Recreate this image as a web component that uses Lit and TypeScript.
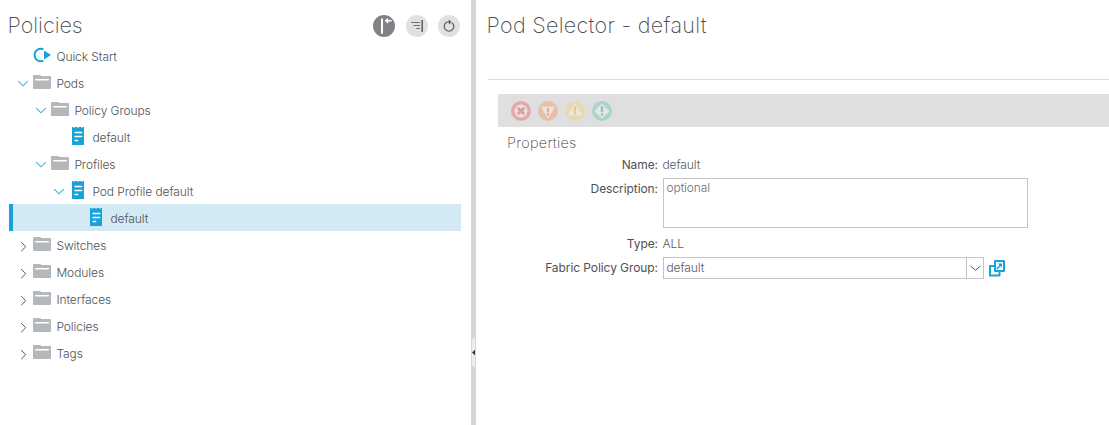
import { LitElement, html, svg, css, nothing } from "lit";
import { customElement, state } from "lit/decorators.js";
import { classMap } from "lit/directives/class-map.js";

type Kind = "start" | "folder" | "doc";
interface Node {
  label: string;
  depth: number;
  kind: Kind;
  open?: boolean;
}

const NODES: Node[] = [
  { label: "Quick Start", depth: 0, kind: "start" },
  { label: "Pods", depth: 0, kind: "folder", open: true },
  { label: "Policy Groups", depth: 1, kind: "folder", open: true },
  { label: "default", depth: 2, kind: "doc" },
  { label: "Profiles", depth: 1, kind: "folder", open: true },
  { label: "Pod Profile default", depth: 2, kind: "doc", open: true },
  { label: "default", depth: 3, kind: "doc" },
  { label: "Switches", depth: 0, kind: "folder", open: false },
  { label: "Modules", depth: 0, kind: "folder", open: false },
  { label: "Interfaces", depth: 0, kind: "folder", open: false },
  { label: "Policies", depth: 0, kind: "folder", open: false },
  { label: "Tags", depth: 0, kind: "folder", open: false },
];

const ICONS = {
  start: html`<svg width="18" height="18" viewBox="0 0 18 18">
    <path d="M10.4 3.4A6.2 6.2 0 1 0 10.4 14.6" fill="none" stroke="#17a2d9" stroke-width="1.9" />
    <path d="M11 4.6L18 9L11 13.4Z" fill="#17a2d9" />
  </svg>`,
  folder: html`<svg width="18" height="18" viewBox="0 0 18 18">
    <path d="M0 2.8Q0 2 .8 2H7.3Q8 2 8 3H17.2Q18 3 18 3.8V15.2Q18 16 17.2 16H.8Q0 16 0 15.2Z" fill="#b4b8bb" />
    <path d="M2.6 6.7H15.4" stroke="#fff" stroke-width="1.4" stroke-linecap="round" />
  </svg>`,
  doc: html`<svg width="18" height="18" viewBox="0 0 18 18">
    <path d="M3 0H4.2L5 1.3L5.8 0H8.2L9 1.3L9.8 0H12.2L13 1.3L13.8 0H15V18H3Z" fill="#17a2d9" />
    <path d="M6 5.5H12.7M6 9.5H12.7M6 13.5H8.7" stroke="#fff" stroke-width="1.4" stroke-linecap="round" />
  </svg>`,
};

const FAULTS = [
  {
    color: "#e5a9a9",
    mark: svg`<circle cx="10" cy="10" r="6.4" fill="#e6e3e3"/><path d="M6.7 6.7L13.3 13.3M13.3 6.7L6.7 13.3" stroke="#e09c9c" stroke-width="2.8"/>`,
  },
  {
    color: "#e8c0aa",
    mark: svg`<path d="M2.8 5.8H17.2L10 17.6Z" fill="#e8e5e3"/><path d="M10 7V11.4M10 12.4V14.6" stroke="#e3ab8a" stroke-width="2.2"/>`,
  },
  {
    color: "#ead8ae",
    mark: svg`<path d="M10 2.2L17.4 14.2H2.6Z" fill="#e8e6e2"/><path d="M10 5.4V10.4M10 11.4V13.4" stroke="#e2c783" stroke-width="2.2"/>`,
  },
  {
    color: "#abd2cb",
    mark: svg`<path d="M10 2.4L17.6 10L10 17.6L2.4 10Z" fill="#e3e7e6"/><path d="M10 5.2V11.2M10 12.4V14.6" stroke="#8cc6bc" stroke-width="2.4"/>`,
  },
];

@customElement("policy-tree")
class PolicyTree extends LitElement {
  @state() private selected = 6;

  static styles = css`
    :host { display: block; }
    .head { display: flex; align-items: center; height: 42px; padding: 0 11px 0 8px; box-sizing: border-box; }
    .title { flex: 1; font-size: 21.5px; line-height: 30px; padding-top: 8px; font-weight: 200; letter-spacing: 0; margin-left: -0.5px; color: #4c4d4f; }
    .tools { display: flex; gap: 10px; padding-top: 10px; }
    .tools svg { display: block; width: 22px; height: 22px; }
    .tools svg:first-child { margin-right: 1px; }
    .tree { margin: 0 10px 0 9px; }
    .row { display: flex; align-items: center; height: 27px; box-sizing: border-box; border-left: 4px solid transparent; cursor: default; }
    .row.selected { background: #d3eaf5; border-left-color: #17a2d9; }
    .indent { flex: none; }
    .arrow { width: 11px; height: 10px; margin: 0 4px 0 5px; flex: none; }
    .arrow svg, .icon svg { display: block; }
    .icon { width: 18px; height: 18px; flex: none; margin: 0 5.4px 1px 0; }
    .label { font-size: 12px; line-height: 18px; padding-top: 3px; letter-spacing: -0.08px; white-space: nowrap; color: #505153; }
  `;

  private arrow(open?: boolean) {
    if (open === undefined) return nothing;
    return open
      ? html`<svg width="11" height="10"><path d="M.2 3.2L5 7.8L9.8 3.2" fill="none" stroke="#3fb0dd" stroke-width="1.1" /></svg>`
      : html`<svg width="11" height="12"><path d="M3.2 2.2L7.8 6.7L3.2 11.2" fill="none" stroke="#58595b" stroke-width="1" /></svg>`;
  }

  render() {
    return html`
      <div class="head">
        <div class="title">Policies</div>
        <div class="tools">
          <svg viewBox="0 0 22 22">
            <circle cx="11" cy="11" r="11" fill="#808285" />
            <path d="M9 4.2V18" stroke="#fff" stroke-width="2" stroke-linecap="round" />
            <path d="M13 5.8H18.7M15 3.6L12.8 5.8L15 8" fill="none" stroke="#fff" stroke-width="1.5" />
          </svg>
          <svg viewBox="0 0 22 22">
            <circle cx="11" cy="11" r="11" fill="#e1e1e1" />
            <path d="M5 7.5H14M7.7 10.5H14M10.3 13.5H14" stroke="#707174" stroke-width="1.1" />
            <path d="M16.2 5V17" stroke="#58595b" stroke-width="1.5" />
          </svg>
          <svg viewBox="0 0 22 22">
            <circle cx="11" cy="11" r="11" fill="#e1e1e1" />
            <path d="M8 7.7A4.8 4.8 0 1 0 14 7.7" fill="none" stroke="#58595b" stroke-width="1.2" />
            <path d="M7.6 7.5L11 6.8" fill="none" stroke="#58595b" stroke-width="1.1" />
            <path d="M10.6 4.6L13.6 7L11 9.4Z" fill="#58595b" />
          </svg>
        </div>
      </div>
      <div class="tree">
        ${NODES.map(
          (n, i) => html`<div
            class=${classMap({ row: true, selected: i === this.selected })}
            @click=${() => (this.selected = i)}
          >
            <span class="indent" style="width:${n.depth * 18}px"></span>
            <span class="arrow">${this.arrow(n.open)}</span>
            <span class="icon">${ICONS[n.kind]}</span>
            <span class="label">${n.label}</span>
          </div>`
        )}
      </div>
    `;
  }
}

@customElement("pod-selector")
class PodSelector extends LitElement {
  static styles = css`
    :host { display: block; }
    .title { font-size: 21.5px; line-height: 30px; padding: 10px 0 0 10.5px; height: 79px; box-sizing: border-box; font-weight: 200; letter-spacing: 0.32px; color: #4c4d4f; }
    .rule { height: 1px; background: #dcdcdc; margin-left: 12px; }
    .bar { height: 33px; margin: 14px 0 0 22px; padding-left: 13px; background: #dfdfdf; display: flex; align-items: center; gap: 7px; }
    .bar svg { display: block; width: 20px; height: 20px; margin-top: 1px; }
    .section { font-size: 14.5px; font-weight: 200; line-height: 20px; margin: 6px 0 0 31px; height: 19px; letter-spacing: 0.26px; color: #3f4042; }
    .form { display: grid; grid-template-columns: 182px auto; grid-template-rows: 26px 50px 29px 22px; column-gap: 5px; justify-content: start; }
    .key { text-align: right; font-size: 12px; line-height: 18px; font-weight: 400; letter-spacing: -0.08px; color: #505153; padding-top: 4px; white-space: nowrap; }
    .key.desc { padding-top: 2px; }
    .key.type { padding-top: 7px; }
    .key.group { padding-top: 2px; }
    .val { font-size: 12px; line-height: 18px; padding-top: 4px; letter-spacing: -0.1px; margin-left: -0.5px; }
    .val.type { padding-top: 7px; }
    .area { box-sizing: border-box; width: 365px; height: 50px; border: 1px solid #c4c4c6; padding: 0 2.5px; font-size: 12px; line-height: 17px; letter-spacing: -0.1px; color: #6d6e71; }
    .pick { display: flex; align-items: center; }
    .combo { box-sizing: border-box; width: 321px; height: 22px; border: 1px solid #c4c4c6; display: flex; }
    .text { flex: 1; padding-left: 2.5px; font-size: 12px; line-height: 20px; letter-spacing: -0.1px; }
    .drop { width: 16px; border-left: 1px solid #c4c4c6; display: grid; place-items: center; }
    .link { display: block; margin-left: 5px; }
  `;

  render() {
    return html`
      <div class="title">Pod Selector - default</div>
      <div class="rule"></div>
      <div class="bar">
        ${FAULTS.map(
          (f) => html`<svg viewBox="0 0 20 20"><circle cx="10" cy="10" r="10" fill=${f.color} />${f.mark}</svg>`
        )}
      </div>
      <div class="section">Properties</div>
      <div class="form">
        <div class="key">Name:</div>
        <div class="val">default</div>
        <div class="key desc">Description:</div>
        <div class="area">optional</div>
        <div class="key type">Type:</div>
        <div class="val type">ALL</div>
        <div class="key group">Fabric Policy Group:</div>
        <div class="pick">
          <div class="combo">
            <div class="text">default</div>
            <div class="drop">
              <svg width="11" height="8"><path d="M.5 2L5.5 6.2L10.5 2" fill="none" stroke="#58595b" stroke-width="1" /></svg>
            </div>
          </div>
          <svg class="link" width="16" height="17" viewBox="0 0 16 17">
            <path d="M5 6H1V15.5H10.5V12" fill="none" stroke="#17a2d9" stroke-width="2" stroke-linejoin="round" />
            <path d="M6 1H15V11H6Z" fill="none" stroke="#17a2d9" stroke-width="2" stroke-linejoin="round" />
            <path d="M7.8 9L12.2 4.6" fill="none" stroke="#17a2d9" stroke-width="1.6" />
            <path d="M8.8 3.4H13V7.6Z" fill="#17a2d9" />
          </svg>
        </div>
      </div>
    `;
  }
}

@customElement("app-root")
class AppRoot extends LitElement {
  static styles = css`
    :host {
      display: flex;
      height: 425px;
      overflow: hidden;
      background: #fff;
      color: #58595b;
      font-family: Inter, "Liberation Sans", sans-serif;
      font-weight: 300;
    }
    .left { width: 471px; flex: none; }
    .split { width: 5px; flex: none; background: #d6d5d3; display: flex; flex-direction: column; padding-top: 337px; box-sizing: border-box; }
    .split svg { display: block; }
    .right { flex: 1; min-width: 0; }
  `;

  render() {
    return html`
      <policy-tree class="left"></policy-tree>
      <div class="split">
        <svg width="5" height="31">
          <path d="M1 2.5L4 0V31L1 28.5Z" fill="#eeeeee" />
          <path d="M1 15.5L4 12.7V18.3Z" fill="#333" />
        </svg>
      </div>
      <pod-selector class="right"></pod-selector>
    `;
  }
}
